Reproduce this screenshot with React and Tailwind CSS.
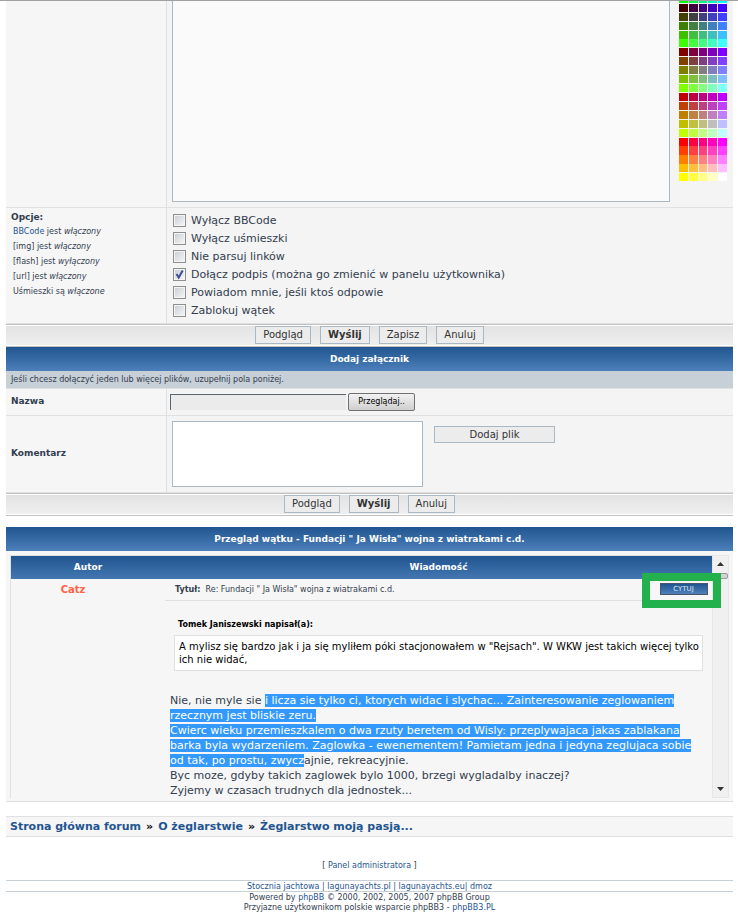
import React from 'react';

const LEVELS = [0, 64, 128, 191, 255];

// rows that touch the next one
const TIGHT_ROWS = [4, 16, 17, 18];
const SHORT_ROWS = [4, 16];

const paletteRows = [];
LEVELS.forEach((r) => {
  LEVELS.forEach((g) => {
    paletteRows.push(LEVELS.map((b) => `rgb(${r}, ${g}, ${b})`));
  });
});

const rowClass = (i) => {
  if (i === 0) return 'h-[3px] pb-px';
  if (SHORT_ROWS.includes(i)) return 'h-2';
  if (TIGHT_ROWS.includes(i)) return 'h-[9px]';
  return 'h-[9px] pb-px';
};

const Palette = () => (
  <div>
    {paletteRows.slice(4).map((row, i) => (
      <div
        key={i}
        className={`grid grid-cols-[9px_9px_8px_9px_9px] gap-x-px ${rowClass(i)}`}
      >
        {row.map((color) => (
          <a key={color} href="#color" aria-label={color} style={{ backgroundColor: color }} />
        ))}
      </div>
    ))}
  </div>
);

const options = [
  { id: 'bbcode', label: 'Wyłącz BBCode' },
  { id: 'smilies', label: 'Wyłącz uśmieszki' },
  { id: 'links', label: 'Nie parsuj linków' },
  { id: 'signature', label: 'Dołącz podpis (można go zmienić w panelu użytkownika)', checked: true },
  { id: 'notify', label: 'Powiadom mnie, jeśli ktoś odpowie' },
  { id: 'lock', label: 'Zablokuj wątek' },
];

const Option = ({ id, label, checked }) => (
  <div className="flex h-[18px] items-center">
    <span className="relative mr-[5px] mb-0.5 h-[13px] w-[13px]">
      <input
        type="checkbox"
        id={id}
        defaultChecked={checked}
        className="block h-[13px] w-[13px] appearance-none border border-[#8e8f8f] bg-gradient-to-br from-[#c8ccd4] to-[#f8f8f8] shadow-[inset_0_0_0_1px_#f4f4f4]"
      />
      {checked && (
        <svg viewBox="0 0 13 13" className="pointer-events-none absolute inset-0 h-[13px] w-[13px]">
          <path d="M3.5 6 L5.7 9.5 L9.7 2.5" fill="none" stroke="#3b4f95" strokeWidth="2" />
        </svg>
      )}
    </span>
    <label htmlFor={id} className="text-[11px] leading-[18px]">{label}</label>
  </div>
);

const Bar = ({ children }) => (
  <h2 className="h-6 bg-gradient-to-b from-[#1f5590] to-[#4d80bb] text-center text-[9px] leading-6 font-bold text-white">
    {children}
  </h2>
);

const FormButton = ({ children, bold }) => (
  <button
    type="button"
    className={`h-[18px] border border-[#a9b8c2] bg-[#ececec] px-[7px] text-[10px] leading-4 text-[#333] ${bold ? 'font-bold' : ''}`}
  >
    {children}
  </button>
);

const ButtonRow = ({ children }) => (
  <div className="flex h-[23px] items-center justify-center gap-[9px] border-y border-[#c2c2c2] bg-gradient-to-b from-[#e2e2e2] to-[#f0f0f0] pb-0.5 shadow-[inset_0_1px_0_#fff,inset_0_-1px_0_#fff]">
    {children}
  </div>
);

const Mark = ({ children }) => <span className="bg-[#3399ff] text-white">{children}</span>;

const App = () => {
  return (
    <div className="border-t border-[#a0a0a0] bg-white pr-[5px] pl-1.5 font-['DejaVu_Sans',sans-serif] text-[#323d4f]">
      {/* Message field */}
      <div className="flex h-[207px] border-b border-[#e0e0e0] bg-[#f4f4f4]">
        <div className="w-[161px] shrink-0 border-r border-[#e0e0e0] bg-[#f6f6f6]" />
        <div className="flex flex-1 justify-between pr-1.5 pl-[5px]">
          <textarea
            aria-label="Wiadomość"
            className="mr-[9px] h-[201px] flex-1 resize-none border border-t-0 border-[#a9b8c2] bg-[#fafafa]"
          />
          <Palette />
        </div>
      </div>

      {/* Options */}
      <div className="flex h-[116px] border-b border-[#e0e0e0] bg-[#f4f4f4]">
        <div className="w-[161px] shrink-0 border-r border-[#e0e0e0] bg-[#f6f6f6] pt-[3px] pl-[5px]">
          <p className="text-[9px] leading-[13px] font-bold">Opcje:</p>
          <div className="pl-0.5 text-[8px] leading-[15px]">
            <p><a href="#bbcode-faq" className="text-[#1f5590]">BBCode</a> jest <em>włączony</em></p>
            <p>[img] jest <em>włączony</em></p>
            <p>[flash] jest <em>wyłączony</em></p>
            <p>[url] jest <em>włączony</em></p>
            <p>Uśmieszki są <em>włączone</em></p>
          </div>
        </div>
        <div className="pt-1 pl-1.5">
          {options.map((o) => (
            <Option key={o.id} {...o} />
          ))}
        </div>
      </div>

      <ButtonRow>
        <FormButton>Podgląd</FormButton>
        <FormButton bold>Wyślij</FormButton>
        <FormButton>Zapisz</FormButton>
        <FormButton>Anuluj</FormButton>
      </ButtonRow>

      {/* Attachment */}
      <Bar>Dodaj załącznik</Bar>
      <p className="h-[17px] bg-[#c7cfd7] pl-[5px] text-[8px] leading-[17px]">
        Jeśli chcesz dołączyć jeden lub więcej plików, uzupełnij pola poniżej.
      </p>
      <div className="flex h-7 border-y border-[#e0e0e0] bg-[#f4f4f4]">
        <div className="flex w-[161px] shrink-0 items-center border-r border-[#e0e0e0] bg-[#f6f6f6] pl-[5px]">
          <label htmlFor="file" className="text-[9px] font-bold">Nazwa</label>
        </div>
        <div className="flex items-center pl-[3px]">
          <input
            id="file"
            type="text"
            readOnly
            className="mr-0.5 h-4 w-44 border-t border-l border-[#5c666e] bg-[#ebebeb]"
          />
          <button
            type="button"
            className="h-[18px] w-[67px] rounded-xs border border-[#707070] bg-gradient-to-b from-[#f2f2f2] to-[#cfcfcf] text-[8px] leading-4 text-black"
          >
            Przeglądaj..
          </button>
        </div>
      </div>
      <div className="flex h-[77px] border-b border-[#e0e0e0] bg-[#f4f4f4]">
        <div className="flex w-[161px] shrink-0 items-center border-r border-[#e0e0e0] bg-[#f6f6f6] pl-[5px]">
          <label htmlFor="comment" className="text-[9px] font-bold">Komentarz</label>
        </div>
        <div className="flex pt-[5px] pl-[5px]">
          <textarea id="comment" className="h-[66px] w-[251px] resize-none border border-[#a9b8c2] bg-white" />
          <button
            type="button"
            className="mt-[5px] ml-[11px] h-[17px] w-[121px] border border-[#a9b8c2] bg-[#ececec] text-[10px] leading-4 text-[#333]"
          >
            Dodaj plik
          </button>
        </div>
      </div>
      <ButtonRow>
        <FormButton>Podgląd</FormButton>
        <FormButton bold>Wyślij</FormButton>
        <FormButton>Anuluj</FormButton>
      </ButtonRow>

      {/* Topic review */}
      <div className="mt-[11px]">
        <Bar>Przegląd wątku - Fundacji " Ja Wisła" wojna z wiatrakami c.d.</Bar>
        <div className="relative flex border-b border-[#e0e0e0] bg-[#f6f6f6] pt-1 pr-1 pb-[3px] pl-1">
          <div className="h-[243px] flex-1 overflow-hidden border-t border-l border-[#e0e0e0]">
            <div className="flex h-[23px] bg-gradient-to-b from-[#1f5590] to-[#4477b2] text-center text-[9px] leading-[23px] font-bold text-white">
              <h3 className="w-[154px]">Autor</h3>
              <h3 className="flex-1">Wiadomość</h3>
            </div>
            <div className="flex">
              <div className="w-[154px] shrink-0 pr-[30px] pt-1 text-center text-[10px] leading-[14px] font-bold text-[#ff6347]">
                Catz
              </div>
              <div className="flex-1">
                <p className="h-[22px] border-b border-[#e0e0e0] pl-2.5 text-[8px] leading-[22px]">
                  <b>Tytuł:</b>&nbsp; Re: Fundacji " Ja Wisła" wojna z wiatrakami c.d.
                </p>
                <p className="mt-[18px] pl-[13px] text-[8px] leading-3 font-bold text-black">Tomek Janiszewski napisał(a):</p>
                <blockquote className="mt-1 mr-[9px] ml-[9px] border border-[#e0e0e0] bg-white py-1 pl-1 text-[10px] leading-[13px] whitespace-nowrap text-black">
                  A mylisz się bardzo jak i ja się myliłem póki stacjonowałem w "Rejsach". W WKW jest takich więcej tylko<br />
                  ich nie widać,
                </blockquote>
                <p className="mt-[22px] pl-[5px] text-[11px] leading-[15px] whitespace-nowrap">
                  Nie, nie myle sie <Mark>i licza sie tylko ci, ktorych widac i slychac... Zainteresowanie zeglowaniem</Mark><br />
                  <Mark>rzecznym jest bliskie zeru.</Mark><br />
                  <Mark>Cwierc wieku przemieszkalem o dwa rzuty beretem od Wisly: przeplywajaca jakas zablakana</Mark><br />
                  <Mark>barka byla wydarzeniem. Zaglowka - ewenementem! Pamietam jedna i jedyna zeglujaca sobie</Mark><br />
                  <Mark>od tak, po prostu, zwycz</Mark>ajnie, rekreacyjnie.<br />
                  Byc moze, gdyby takich zaglowek bylo 1000, brzegi wygladalby inaczej?<br />
                  Zyjemy w czasach trudnych dla jednostek...
                </p>
              </div>
            </div>
          </div>

          {/* Scrollbar */}
          <div className="flex w-[17px] flex-col items-center justify-between border border-[#e6e6e6] bg-[#f0f0f0] py-1.5">
            <div className="flex w-full flex-col items-center gap-[7px]">
              <svg viewBox="0 0 7 4" className="h-1 w-[7px]"><path d="M0 4 L3.5 0 L7 4 Z" fill="#333" /></svg>
              <div className="h-1.5 w-[15px] rounded-xs border border-[#999] bg-[#d4d4d4]" />
            </div>
            <svg viewBox="0 0 7 4" className="h-1 w-[7px]"><path d="M0 0 L3.5 4 L7 0 Z" fill="#333" /></svg>
          </div>

          {/* Highlighted quote button */}
          <div className="absolute top-[22px] right-3 flex h-[35px] w-[79px] justify-center border-8 border-[#22b14c] pt-0.5 pl-1">
            <button
              type="button"
              className="h-3 w-12 border border-[#4a5568] bg-gradient-to-b from-[#1f5590] to-[#4d80bb] text-[7px] leading-[10px] text-[#dfe8f2]"
            >
              CYTUJ
            </button>
          </div>
        </div>
      </div>

      {/* Breadcrumbs */}
      <nav className="mt-3.5 h-[21px] border-y border-[#e0e0e0] bg-[#f6f6f6] pl-1 text-[11px] leading-5 font-bold text-black">
        <a href="#forum" className="text-[#1f5590]">Strona główna forum</a>
        <span className="mx-[5px]">»</span>
        <a href="#zeglarstwo" className="text-[#1f5590]">O żeglarstwie</a>
        <span className="mx-[5px]">»</span>
        <a href="#pasja" className="text-[#1f5590]">Żeglarstwo moją pasją...</a>
      </nav>

      {/* Footer */}
      <footer className="pt-[22px] text-center text-[8px] leading-[10px]">
        <p className="h-[21px] leading-[14px]">[ <a href="#admin" className="text-[#1f5590]">Panel administratora</a> ]</p>
        <p className="mb-px h-3 border-y border-[#c7cfd7] leading-3 text-[#1f5590]">
          <a href="#stocznia">Stocznia jachtowa</a> | <a href="#pl">lagunayachts.pl</a> | <a href="#eu">lagunayachts.eu</a>| <a href="#dmoz">dmoz</a>
        </p>
        <p>Powered by <a href="#phpbb" className="text-[#1f5590]">phpBB</a> © 2000, 2002, 2005, 2007 phpBB Group</p>
        <p>Przyjazne użytkownikom polskie wsparcie phpBB3 - <a href="#phpbb3" className="text-[#1f5590]">phpBB3.PL</a></p>
      </footer>
    </div>
  );
};

export default App;
